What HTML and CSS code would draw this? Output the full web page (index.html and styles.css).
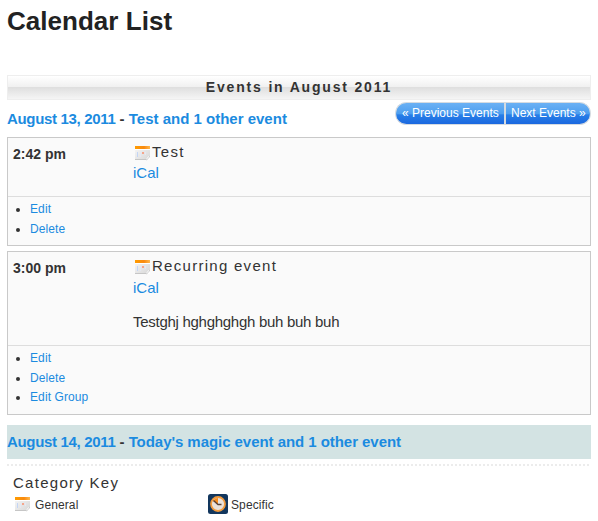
FILE: index.html
```html
<!DOCTYPE html>
<html lang="en">
<head>
<meta charset="utf-8">
<title>Calendar List</title>
<link rel="stylesheet" href="styles.css">
</head>
<body>
<svg width="0" height="0" class="defs" aria-hidden="true">
  <defs>
    <linearGradient id="orange" x1="0" x2="1" y1="0" y2="0"><stop offset="0" stop-color="#ff9c00"/><stop offset=".6" stop-color="#f98a10"/><stop offset="1" stop-color="#ffb84d"/></linearGradient>
    <linearGradient id="paper" x1="0" x2="1" y1="0" y2="1"><stop offset="0" stop-color="#f8f8f8"/><stop offset="1" stop-color="#d6d6d6"/></linearGradient>
    <symbol id="calendar" viewBox="0 0 16 16">
      <path d="M1 1h15v14H1z" fill="url(#paper)"/>
      <path d="M1 1h15v3H1z" fill="url(#orange)"/>
      <path d="M1 4h15v1H1z" fill="#fff"/>
      <path d="M3 7h1v5H3z" fill="#c3d5f6"/>
      <path d="M6 7h1v5H6zM11 7h1v3h-1z" fill="#e5e8f3"/>
      <path d="M8 7h2v2H8z" fill="#f5a58c"/>
      <path d="M1 14h11v1H1z" fill="#c6c6c6"/>
      <path d="M12 15c.6-2 2-3.500 4-4.500V15z" fill="#fff"/>
      <path d="M12 15c1.500-.5 3-2 4-4.500" fill="none" stroke="#c0c0c0" stroke-width=".8"/>
    </symbol>
  </defs>
</svg>
<main>
  <h1>Calendar List</h1>
  <h2 class="month">Events in August 2011</h2>
  <div class="day-row">
    <h3 class="day"><a class="date">August 13, 2011</a> - <a>Test and 1 other event</a></h3>
    <nav class="pager"><a class="prev">« Previous Events</a><a class="next">Next Events »</a></nav>
  </div>
  <article class="event first">
    <div class="summary">
      <strong class="time">2:42 pm</strong>
      <div class="details">
        <h4><svg class="cal"><use href="#calendar"/></svg>Test</h4>
        <a class="ical">iCal</a>
      </div>
    </div>
    <ul><li><a>Edit</a></li><li><a>Delete</a></li></ul>
  </article>
  <article class="event second">
    <div class="summary">
      <strong class="time">3:00 pm</strong>
      <div class="details">
        <h4><svg class="cal"><use href="#calendar"/></svg>Recurring event</h4>
        <a class="ical">iCal</a>
        <p>Testghj hghghghgh buh buh buh</p>
      </div>
    </div>
    <ul><li><a>Edit</a></li><li><a>Delete</a></li><li><a>Edit Group</a></li></ul>
  </article>
  <h3 class="day today"><a class="date">August 14, 2011</a> - <a>Today's magic event and 1 other event</a></h3>
  <section class="key">
    <svg class="dots" width="584" height="2"><path d="M0 1h584" stroke="#ececec" stroke-width="2" stroke-dasharray="2 2"/></svg>
    <h4>Category Key</h4>
    <div class="categories">
      <span class="category"><svg class="cal"><use href="#calendar"/></svg>General</span>
      <span class="category"><svg class="clock" viewBox="0 0 20 20">
        <rect width="20" height="20" rx="2.500" fill="#12365d"/>
        <circle cx="10" cy="10" r="7" fill="#e9e1da" stroke="#f19a3c" stroke-width="1.800"/>
        <path d="M10 10 5 7a6 6 0 0 1 5-3z" fill="#f58b1d"/>
        <path d="m5.500 6.500 4.500 4h3.500" fill="none" stroke="#5a4033" stroke-width="1.400"/>
      </svg>Specific</span>
    </div>
  </section>
</main>
</body>
</html>
```
FILE: styles.css
```css
* { box-sizing: border-box; }
body { margin: 0; background: #fff; color: #333; font: 15px/20px "Liberation Sans", Arial, sans-serif; }
.defs { display: block; }
main { width: 584px; margin-left: 7px; }
h1, h2, h3, h4, p, ul { margin: 0; padding: 0; }
a { color: #1b8be0; }
h1 { height: 75px; padding-top: 6px; font-size: 26px; line-height: 30px; letter-spacing: .03px; color: #222; }
.month { height: 25px; border: 1px solid #eee; background: linear-gradient(#fff 0, #f0f0f0 49%, #dfdfdf 50%, #f5f5f5 100%); text-align: center; font-size: 14px; line-height: 23px; letter-spacing: 1.82px; }
.day-row { display: flex; justify-content: space-between; height: 37px; }
.day { font-size: 15px; line-height: 34px; }
.day .date { letter-spacing: -.33px; }
.today { letter-spacing: -.05px; }
.day-row .day { padding-top: 2px; }
.pager { display: flex; height: 23px; margin-top: 2px; font-size: 12px; line-height: 21px; }
.pager a { border: 1px solid #d5dbe1; background: linear-gradient(#6bb1f4 0, #4d9eef 52%, #287fe8 56%, #1b68df 100%); color: #fff; white-space: nowrap; }
.pager .prev { width: 109px; padding-left: 6px; border-right: 0; border-radius: 12px 0 0 12px; }
.pager .next { width: 87px; padding-left: 5px; border-left-width: 2px; border-radius: 0 12px 12px 0; }
.event { margin-bottom: 5px; border: 1px solid #c9c9c9; background: #fafafa; }
.summary { display: flex; height: 59px; padding-left: 5px; border-bottom: 1px solid #ddd; }
.time { width: 120px; padding-top: 6px; font-size: 14px; }
.details { padding-top: 4px; }
h4 { display: flex; align-items: center; font-size: 15px; font-weight: 400; line-height: 20px; letter-spacing: 1.28px; }
.cal { width: 16px; height: 16px; flex: none; }
.details .cal { margin: 1px 2px 0 1px; }
.details h4 { height: 20px; }
.ical { display: block; line-height: 22px; }
.first { height: 109px; }
.second { height: 164px; margin-bottom: 10px; }
.second .summary { height: 94px; }
.second .ical { line-height: 24px; }
.details p { margin-top: 11px; line-height: 22px; letter-spacing: -.28px; }
.event ul { padding: 3px 0 0 22px; font-size: 12px; line-height: 19.5px; letter-spacing: .1px; }
.today { height: 34px; background: #d3e3e3; }
.key { padding-top: 5px; }
.dots { display: block; }
.key h4 { margin: 7px 0 0 6px; }
.categories { display: flex; padding-left: 7px; font-size: 12px; letter-spacing: .1px; }
.category { display: flex; align-items: center; width: 194px; height: 23px; }
.category .cal { margin: 0 5px 2px 0; }
.clock { width: 20px; height: 20px; margin: 0 3px 2px 0; }
```
